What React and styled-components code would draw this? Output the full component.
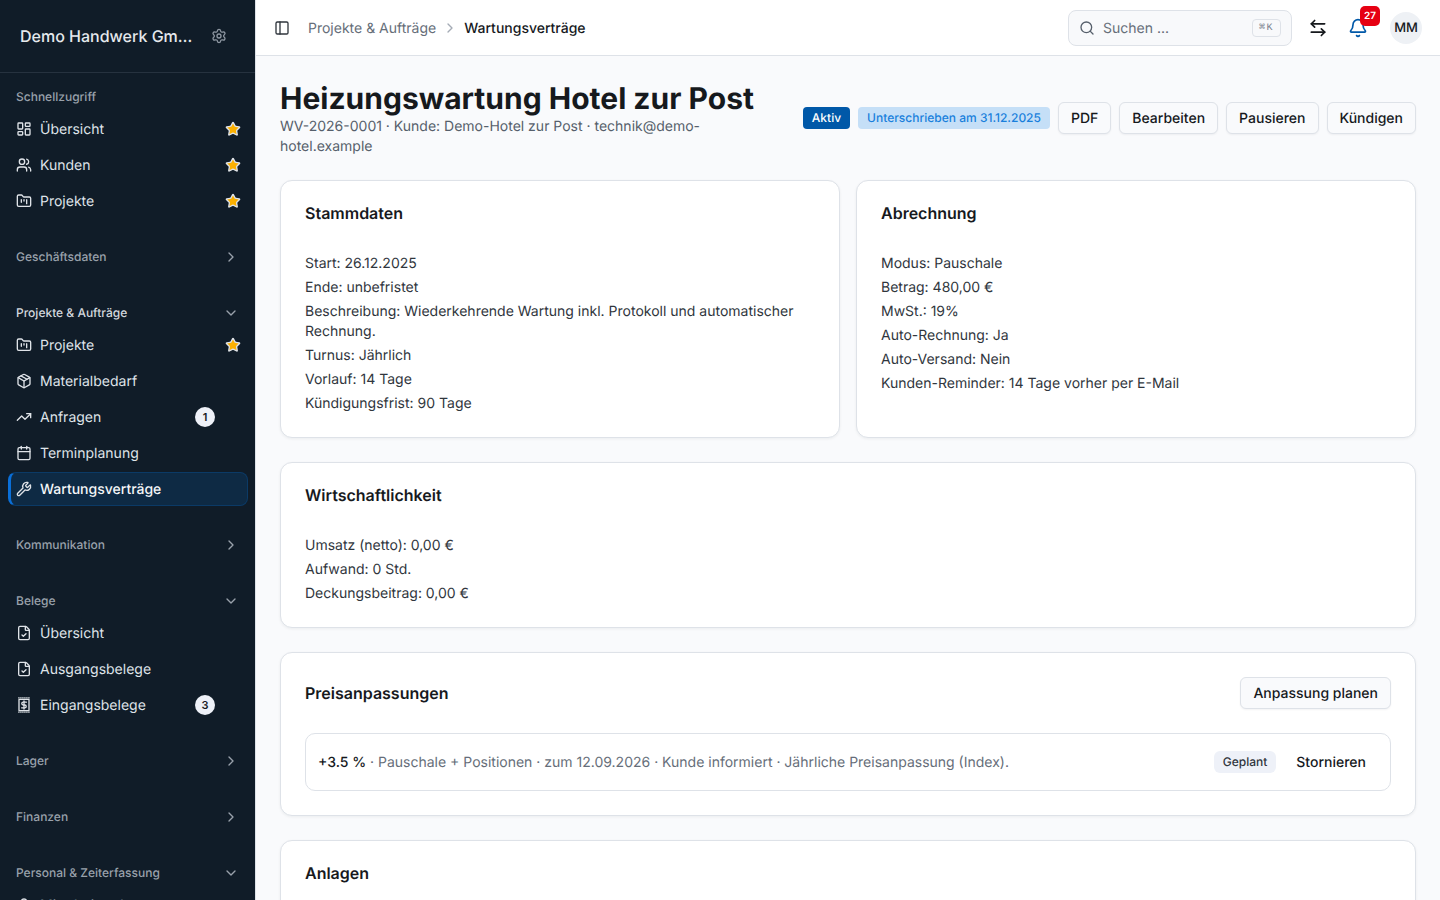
import React from "react";
import styled, { createGlobalStyle } from "styled-components";
import {
  LayoutDashboard, Users, FolderKanban, Package, TrendingUp, Calendar, Wrench, FileCheck,
  Settings, Star, ChevronRight, ChevronDown, PanelLeft, Search, ArrowLeftRight, Bell, User,
} from "lucide-react";

const Global = createGlobalStyle`
  *, *::before, *::after { box-sizing: border-box; }
  html, body { margin: 0; padding: 0; height: 100%; overflow: hidden; }
  body { font-family: Inter, "Liberation Sans", sans-serif; color: #16191d; background: #f9fafc; text-rendering: geometricPrecision; }
`;

const Shell = styled.div`display: flex; width: 1440px; height: 900px; overflow: hidden;`;
const Sidebar = styled.aside`
  width: 256px; flex: none; height: 100%; background: #101c28; border-right: 1px solid #dee2e8;
  display: flex; flex-direction: column; overflow: hidden;
`;
const Brand = styled.div`
  height: 73px; flex: none; display: flex; align-items: center; gap: 18px; padding: 0 20px;
  border-bottom: 1px solid #26323f;
`;
const BrandName = styled.div`
  width: 173px; font-size: 16px; font-weight: 500; color: #e6e9ed; white-space: nowrap;
  overflow: hidden; text-overflow: ellipsis;
`;
const GearIcon = styled(Settings)`color: #8d96a1; flex: none;`;
const Nav = styled.nav`padding: 12px 7px 0 8px; display: flex; flex-direction: column; gap: 27px;`;
const Section = styled.section`padding-bottom: ${p => (p.$collapsed ? "5px" : "0")};`;
const SectionLabel = styled.div`
  height: 24px; padding: 0 8px 2px; display: flex; align-items: center; justify-content: space-between;
  font-size: 12px; font-weight: 500; color: ${p => (p.$open ? "#d4d8de" : "#99a1ab")};
  & > svg { color: #99a1ab; margin: 2px 1px 0 0; }
`;
const ItemList = styled.div`margin-top: 3px; display: flex; flex-direction: column; gap: 2px;`;
const Item = styled.a`
  height: 34px; display: flex; align-items: center; gap: 8px; border-radius: 8px; position: relative;
  padding-left: ${p => (p.$active ? "5px" : "8px")}; font-size: 14px;
  font-weight: ${p => (p.$active ? 500 : 400)}; color: ${p => (p.$active ? "#f4f6f8" : "#dfe3e8")};
  border: ${p => (p.$active ? "1px solid #0b3a66" : "none")};
  border-left: ${p => (p.$active ? "3px solid #0a6fd8" : "none")};
  background: ${p => (p.$active ? "#0e2a44" : "transparent")};
  & > svg { flex: none; color: #dfe3e8; }
`;
const ItemText = styled.span`flex: 1;`;
const FavStar = styled(Star)`
  position: absolute; right: 7px; top: 9px; color: #fbb000; fill: #fbb000;
`;
const Count = styled.span`
  position: absolute; right: 33px; top: 7px; width: 20px; height: 20px; border-radius: 50%;
  background: #eef1f8; color: #16191d; font-size: 11px; font-weight: 600;
  display: flex; align-items: center; justify-content: center;
`;

const Column = styled.div`flex: 1; min-width: 0; height: 100%; display: flex; flex-direction: column;`;
const TopBar = styled.header`
  height: 56px; flex: none; background: #fff; border-bottom: 1px solid #dee2e8;
  display: flex; align-items: center; padding: 0 18px 0 18px;
`;
const PanelIcon = styled(PanelLeft)`color: #30363d; flex: none; margin-right: 18px;`;
const Crumb = styled.span`padding-top: 1px; font-size: 14px; color: ${p => (p.$current ? "#16191d" : "#666e79")}; font-weight: ${p => (p.$current ? 500 : 400)};`;
const CrumbSep = styled(ChevronRight)`color: #a4abb5; margin: 0 6px;`;
const TopRight = styled.div`margin-left: auto; display: flex; align-items: center;`;
const SearchBox = styled.div`
  width: 224px; height: 36px; border: 1px solid #dee2e8; border-radius: 8px; background: #f8f9fb;
  display: flex; align-items: center; padding: 0 10px 0 10px; gap: 8px; font-size: 14px; color: #666e79;
  & > svg { color: #565f6b; flex: none; }
`;
const SearchText = styled.span`flex: 1; padding-top: 1px;`;
const Kbd = styled.kbd`
  width: 29px; height: 18px; border: 1px solid #dee2e8; border-radius: 4px; display: flex; align-items: center;
  justify-content: center; font-family: "Liberation Mono", "DejaVu Sans Mono", monospace; font-size: 10px; color: #7a828d;
  letter-spacing: 1.5px;
`;
const SwapIcon = styled(ArrowLeftRight)`color: #16191d; margin-left: 16px;`;
const BellWrap = styled.div`position: relative; width: 20px; height: 20px; margin-left: 20px; color: #0058a8;`;
const RedBadge = styled.span`
  position: absolute; left: 12px; top: -12px; width: 20px; height: 20px; border-radius: 5px; background: #e60012;
  color: #fff; font-size: 10px; font-weight: 600; display: flex; align-items: center; justify-content: center;
`;
const Avatar = styled.div`
  width: 32px; height: 32px; border-radius: 50%; background: #eef1f5; margin-left: 22px;
  display: flex; align-items: center; justify-content: center; font-size: 13px; font-weight: 500; color: #16191d;
`;

const Main = styled.main`flex: 1; overflow: hidden; background: #f9fafc; padding: 24px 24px 0; display: flex; flex-direction: column; gap: 24px;`;
const PageHead = styled.div`display: flex; align-items: center; gap: 16px;`;
const HeadLeft = styled.div`flex: 1; min-width: 0; padding-top: 1px; margin-bottom: -1px;`;
const PageTitle = styled.h1`margin: 0; font-size: 30px; line-height: 36px; font-weight: 700; color: #16191d; white-space: nowrap;`;
const PageSub = styled.p`margin: 0; font-size: 14px; line-height: 20px; color: #565f6b;`;
const HeadActions = styled.div`display: flex; align-items: center; gap: 8px; flex: none;`;
const Pill = styled.span`
  height: 22px; display: inline-flex; align-items: center; padding: 0 9px 2px; border-radius: 4px; font-size: 12px;
  font-weight: 500; background: ${p => (p.$solid ? "#0058a8" : "#c5dff7")}; color: ${p => (p.$solid ? "#fff" : "#1a7fdc")};
`;
const Button = styled.button`
  height: 32px; padding: 0 12px; border: 1px solid #dee2e8; border-radius: 6px; background: #f9fafc;
  font-family: inherit; font-size: 14px; font-weight: 500; color: #16191d;
  box-shadow: 0 1px 2px rgba(16, 28, 40, 0.05); white-space: nowrap; text-rendering: inherit;
`;
const GhostButton = styled(Button)`border: none; background: transparent; box-shadow: none; padding: 0 12px;`;
const TwoCol = styled.div`display: grid; grid-template-columns: 1fr 1fr; gap: 16px;`;
const Card = styled.section`
  background: #fff; border: 1px solid #dee2e8; border-radius: 12px; padding: 24px;
  box-shadow: 0 1px 3px rgba(16, 28, 40, 0.06); flex: none;
`;
const CardTitle = styled.h2`margin: 0 0 32px; font-size: 16px; line-height: 16px; font-weight: 600; color: #16191d;`;
const CardHeadRow = styled.div`display: flex; align-items: center; justify-content: space-between; margin-bottom: 24px;`;
const RowTitle = styled(CardTitle)`margin: 0;`;
const Lines = styled.div`display: flex; flex-direction: column; gap: 4px; padding-top: 1px; margin-bottom: -1px;`;
const Line = styled.div`font-size: 14px; line-height: 20px; color: #30363d;`;
const AdjustRow = styled.div`
  height: 58px; border: 1px solid #dee2e8; border-radius: 10px; padding: 0 12px; display: flex; align-items: center; gap: 8px;
`;
const AdjustText = styled.div`flex: 1; font-size: 14px; color: #666e79; white-space: nowrap; strong { font-weight: 500; color: #16191d; }`;
const StatusTag = styled.span`
  height: 22px; padding: 0 9px 2px; border-radius: 6px; background: #eef1f8; color: #30363d; font-size: 12px; font-weight: 500;
  display: inline-flex; align-items: center;
`;

function ReceiptDollar({ size = 16 }) {
  return (
    <svg width={size} height={size} viewBox="0 0 16 16" fill="none" stroke="currentColor" strokeWidth="1.33" strokeLinecap="round" strokeLinejoin="round">
      <path d="M2.4 .9h11.2M2.4 15.1h11.2" strokeDasharray="1 1" strokeWidth="1" />
      <path d="M3 2.4h10v11.2H3z" />
      <path d="M10.4 5.2H7.2a1.4 1.4 0 0 0 0 2.8h1.6a1.4 1.4 0 0 1 0 2.8H5.6M8 4v8" />
    </svg>
  );
}

const Fav = () => <FavStar size={16} />;

function NavSection({ label, open, items }) {
  return (
    <Section $collapsed={!items}>
      <SectionLabel $open={label === "Projekte & Aufträge"}>
        {label}
        {open ? <ChevronDown size={16} /> : <ChevronRight size={16} />}
      </SectionLabel>
      {items && <NavItems items={items} />}
    </Section>
  );
}

function NavItems({ items }) {
  return (
    <ItemList>
      {items.map(({ Icon, text, fav, count, active }) => (
        <Item key={text} $active={active}>
          <Icon size={16} />
          <ItemText>{text}</ItemText>
          {fav && <Fav />}
          {count && <Count>{count}</Count>}
        </Item>
      ))}
    </ItemList>
  );
}

export default function App() {
  return (
    <Shell>
      <Global />
      <Sidebar>
        <Brand>
          <BrandName>Demo Handwerk GmbH</BrandName>
          <GearIcon size={16} />
        </Brand>
        <Nav>
          <Section>
            <SectionLabel>Schnellzugriff</SectionLabel>
            <NavItems items={[
              { Icon: LayoutDashboard, text: "Übersicht", fav: true },
              { Icon: Users, text: "Kunden", fav: true },
              { Icon: FolderKanban, text: "Projekte", fav: true },
            ]} />
          </Section>
          <NavSection label="Geschäftsdaten" />
          <NavSection label="Projekte & Aufträge" open items={[
            { Icon: FolderKanban, text: "Projekte", fav: true },
            { Icon: Package, text: "Materialbedarf" },
            { Icon: TrendingUp, text: "Anfragen", count: 1 },
            { Icon: Calendar, text: "Terminplanung" },
            { Icon: Wrench, text: "Wartungsverträge", active: true },
          ]} />
          <NavSection label="Kommunikation" />
          <NavSection label="Belege" open items={[
            { Icon: FileCheck, text: "Übersicht" },
            { Icon: FileCheck, text: "Ausgangsbelege" },
            { Icon: ReceiptDollar, text: "Eingangsbelege", count: 3 },
          ]} />
          <NavSection label="Lager" />
          <NavSection label="Finanzen" />
          <NavSection label="Personal & Zeiterfassung" open items={[
            { Icon: User, text: "Mitarbeitende" },
          ]} />
        </Nav>
      </Sidebar>
      <Column>
        <TopBar>
          <PanelIcon size={16} />
          <Crumb>Projekte &amp; Aufträge</Crumb>
          <CrumbSep size={16} />
          <Crumb $current>Wartungsverträge</Crumb>
          <TopRight>
            <SearchBox>
              <Search size={16} />
              <SearchText>Suchen ...</SearchText>
              <Kbd>⌘K</Kbd>
            </SearchBox>
            <SwapIcon size={20} />
            <BellWrap>
              <Bell size={20} />
              <RedBadge>27</RedBadge>
            </BellWrap>
            <Avatar>MM</Avatar>
          </TopRight>
        </TopBar>
        <Main>
          <PageHead>
            <HeadLeft>
              <PageTitle>Heizungswartung Hotel zur Post</PageTitle>
              <PageSub>WV-2026-0001 · Kunde: Demo-Hotel zur Post · technik@demo-hotel.example</PageSub>
            </HeadLeft>
            <HeadActions>
              <Pill $solid>Aktiv</Pill>
              <Pill>Unterschrieben am 31.12.2025</Pill>
              <Button>PDF</Button>
              <Button>Bearbeiten</Button>
              <Button>Pausieren</Button>
              <Button>Kündigen</Button>
            </HeadActions>
          </PageHead>
          <TwoCol>
            <Card>
              <CardTitle>Stammdaten</CardTitle>
              <Lines>
                <Line>Start: 26.12.2025</Line>
                <Line>Ende: unbefristet</Line>
                <Line>Beschreibung: Wiederkehrende Wartung inkl. Protokoll und automatischer Rechnung.</Line>
                <Line>Turnus: Jährlich</Line>
                <Line>Vorlauf: 14 Tage</Line>
                <Line>Kündigungsfrist: 90 Tage</Line>
              </Lines>
            </Card>
            <Card>
              <CardTitle>Abrechnung</CardTitle>
              <Lines>
                <Line>Modus: Pauschale</Line>
                <Line>Betrag: 480,00 €</Line>
                <Line>MwSt.: 19%</Line>
                <Line>Auto-Rechnung: Ja</Line>
                <Line>Auto-Versand: Nein</Line>
                <Line>Kunden-Reminder: 14 Tage vorher per E-Mail</Line>
              </Lines>
            </Card>
          </TwoCol>
          <Card>
            <CardTitle>Wirtschaftlichkeit</CardTitle>
            <Lines>
              <Line>Umsatz (netto): 0,00 €</Line>
              <Line>Aufwand: 0 Std.</Line>
              <Line>Deckungsbeitrag: 0,00 €</Line>
            </Lines>
          </Card>
          <Card>
            <CardHeadRow>
              <RowTitle>Preisanpassungen</RowTitle>
              <Button>Anpassung planen</Button>
            </CardHeadRow>
            <AdjustRow>
              <AdjustText><strong>+3.5 %</strong> · Pauschale + Positionen · zum 12.09.2026 · Kunde informiert · Jährliche Preisanpassung (Index).</AdjustText>
              <StatusTag>Geplant</StatusTag>
              <GhostButton>Stornieren</GhostButton>
            </AdjustRow>
          </Card>
          <Card>
            <CardTitle>Anlagen</CardTitle>
          </Card>
        </Main>
      </Column>
    </Shell>
  );
}
